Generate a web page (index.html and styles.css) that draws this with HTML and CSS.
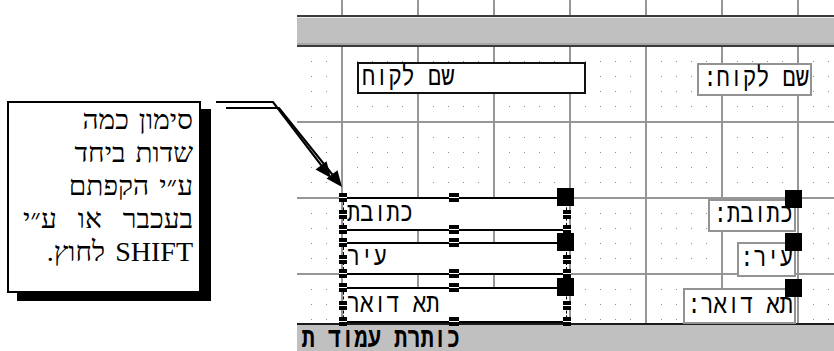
FILE: index.html
```html
<!DOCTYPE html>
<html lang="he">
<head>
<meta charset="UTF-8">
<meta name="viewport" content="width=device-width, initial-scale=1.0">
<title>Form Design - Selecting Fields</title>
<link rel="stylesheet" href="styles.css">
</head>
<body>
<div class="page">

    <div class="design">
        <div class="band-top"></div>
        <div class="section-bar"></div>

        <div class="detail">
            <svg class="grid" width="537" height="276">
                <defs>
                    <pattern id="cell" patternUnits="userSpaceOnUse" x="44" y="74" width="76" height="76">
                        <rect x="0" y="0" width="2" height="76" fill="#969696"/>
                        <rect x="0" y="0" width="76" height="2" fill="#969696"/>
                        <g fill="#8c8c8c">
                            <rect x="16" y="16" width="1" height="1"/><rect x="31" y="16" width="1" height="1"/><rect x="46" y="16" width="1" height="1"/><rect x="61" y="16" width="1" height="1"/>
                            <rect x="16" y="31" width="1" height="1"/><rect x="31" y="31" width="1" height="1"/><rect x="46" y="31" width="1" height="1"/><rect x="61" y="31" width="1" height="1"/>
                            <rect x="16" y="46" width="1" height="1"/><rect x="31" y="46" width="1" height="1"/><rect x="46" y="46" width="1" height="1"/><rect x="61" y="46" width="1" height="1"/>
                            <rect x="16" y="61" width="1" height="1"/><rect x="31" y="61" width="1" height="1"/><rect x="46" y="61" width="1" height="1"/><rect x="61" y="61" width="1" height="1"/>
                        </g>
                    </pattern>
                </defs>
                <rect width="100%" height="100%" fill="url(#cell)"/>
            </svg>

            <div class="ctl textbox name-box"><span>שם לקוח</span></div>
            <div class="ctl label name-label"><span>שם לקוח:</span></div>

            <div class="ctl field f-address">
                <span>כתובת</span>
                <i class="h h-tl"></i><i class="h h-ml"></i><i class="h h-bl"></i>
                <i class="h h-tc"></i><i class="h h-bc"></i>
                <i class="h h-mr"></i><i class="h h-br"></i><i class="move"></i>
            </div>
            <div class="ctl field f-city">
                <span>עיר</span>
                <i class="h h-tl"></i><i class="h h-ml"></i><i class="h h-bl"></i>
                <i class="h h-tc"></i><i class="h h-bc"></i>
                <i class="h h-mr"></i><i class="h h-br"></i><i class="move"></i>
            </div>
            <div class="ctl field f-zip">
                <span>תא דואר</span>
                <i class="h h-tl"></i><i class="h h-ml"></i><i class="h h-bl"></i>
                <i class="h h-tc"></i><i class="h h-bc"></i>
                <i class="h h-mr"></i><i class="h h-br"></i><i class="move"></i>
            </div>

            <div class="ctl label l-address"><span>כתובת:</span><i class="move"></i></div>
            <div class="ctl label l-city"><span>עיר:</span><i class="move"></i></div>
            <div class="ctl label l-zip"><span>תא דואר:</span><i class="move"></i></div>
        </div>

        <div class="footer-bar">
            <div class="footer-title">כותרת עמוד ת</div>
        </div>
    </div>

    <div class="callout">
        <span class="line">סימון כמה</span>
        <span class="line">שדות ביחד</span>
        <span class="line">ע״י הקפתם</span>
        <span class="line line-wide">בעכבר או ע״י</span>
        <span class="line">SHIFT לחוץ.</span>
    </div>

    <svg class="arrow" width="834" height="351" viewBox="0 0 834 351">
        <polyline points="216,102 273,102 321.5,165.6" fill="none" stroke="#000" stroke-width="2.2"/>
        <polygon points="331,178 315.5,169.5 326.5,161.2" fill="#000"/>
        <polyline points="226,108 279,108 332.5,174.6" fill="none" stroke="#000" stroke-width="2.2"/>
        <polygon points="342,187 326.5,178.5 337.5,170.2" fill="#000"/>
    </svg>

</div>
</body>
</html>
```

FILE: styles.css
```css
* {
    box-sizing: border-box;
}
body {
    margin: 0;
    background-color: #fff;
    font-family: "Liberation Mono", "DejaVu Sans Mono", monospace;
    color: #000;
}
.page {
    position: relative;
    width: 834px;
    height: 351px;
    overflow: hidden;
}

/* design surface */
.design {
    margin-left: 297px;
    height: 351px;
    display: flex;
    flex-direction: column;
}
.band-top {
    height: 15px;
    background: linear-gradient(to right, #969696 2px, transparent 2px) 44px 0 / 76px 100% repeat-x;
}
.section-bar {
    height: 32px;
    background-color: #c0c0c0;
    border-top: 2px solid #3c3c3c;
    border-bottom: 2px solid #3c3c3c;
    box-shadow: inset 0 1px #ececec, inset 0 -2px #a8a8a8;
}
.detail {
    position: relative;
    height: 276px;
}
.grid {
    position: absolute;
    left: 0;
    top: 0;
    display: block;
}
.footer-bar {
    height: 28px;
    background-color: #c0c0c0;
    border-top: 2px solid #1c1c1c;
    display: flex;
    align-items: center;
}
.footer-title {
    width: 163px;
    white-space: nowrap;
    direction: rtl;
    font-weight: bold;
    font-size: 22px;
    line-height: 16px;
    transform: translateY(2px) scaleY(1.3);
}

/* controls on the grid */
.ctl {
    position: absolute;
    background-color: #fff;
    direction: rtl;
    font-size: 22px;
    white-space: nowrap;
    display: flex;
    align-items: center;
}
.ctl span {
    transform: scaleY(1.25);
}
.textbox {
    border: 2px solid #111;
    justify-content: flex-end;
    padding-left: 3px;
}
.label {
    border: 2px solid #939393;
    justify-content: flex-start;
    padding-right: 1px;
}
.field {
    left: 46px;
    width: 224px;
    border-top: 2px solid #000;
    border-bottom: 2px solid #000;
    border-left: 1px dashed #000;
    border-right: 1px dashed #000;
    justify-content: flex-end;
    padding-left: 3px;
}

.name-box { left: 60px; top: 15px; width: 229px; height: 32px; }
.name-label { left: 400px; top: 16px; width: 115px; height: 33px; }

.f-address { top: 150px; height: 34px; }
.f-city { top: 195px; height: 33px; }
.f-zip { top: 240px; height: 36px; }

.l-address { left: 411px; top: 152px; width: 88px; height: 33px; }
.l-city { left: 440px; top: 195px; width: 59px; height: 35px; }
.l-zip { left: 386px; top: 241px; width: 113px; height: 36px; }

/* selection handles */
.h {
    position: absolute;
    width: 8px;
    height: 9px;
    background: linear-gradient(#000 4px, #fff 4px 5px, #000 5px);
}
.h-tl, .h-ml, .h-bl { left: -5px; }
.h-tc, .h-bc { left: 105px; width: 10px; }
.h-mr, .h-br { right: -5px; }
.h-tl, .h-tc { top: -6px; }
.h-bl, .h-bc, .h-br { bottom: -5px; }
.h-ml, .h-mr { top: calc(50% - 4px); }
.move {
    position: absolute;
    top: -11px;
    right: -8px;
    width: 17px;
    height: 18px;
    background-color: #000;
}

/* callout */
.callout {
    position: absolute;
    left: 7px;
    top: 101px;
    width: 194px;
    height: 192px;
    border: 2px solid #000;
    background-color: #fff;
    box-shadow: 10px 8px 0 #000;
    padding: 0 6px 0 0;
    direction: rtl;
    text-align: right;
    font-family: "Liberation Serif", "DejaVu Serif", serif;
    font-size: 28px;
    line-height: 33px;
    word-spacing: 3px;
}
.line {
    display: block;
    white-space: nowrap;
}
.line-wide {
    word-spacing: 14px;
}
.arrow {
    position: absolute;
    left: 0;
    top: 0;
    pointer-events: none;
}
```
